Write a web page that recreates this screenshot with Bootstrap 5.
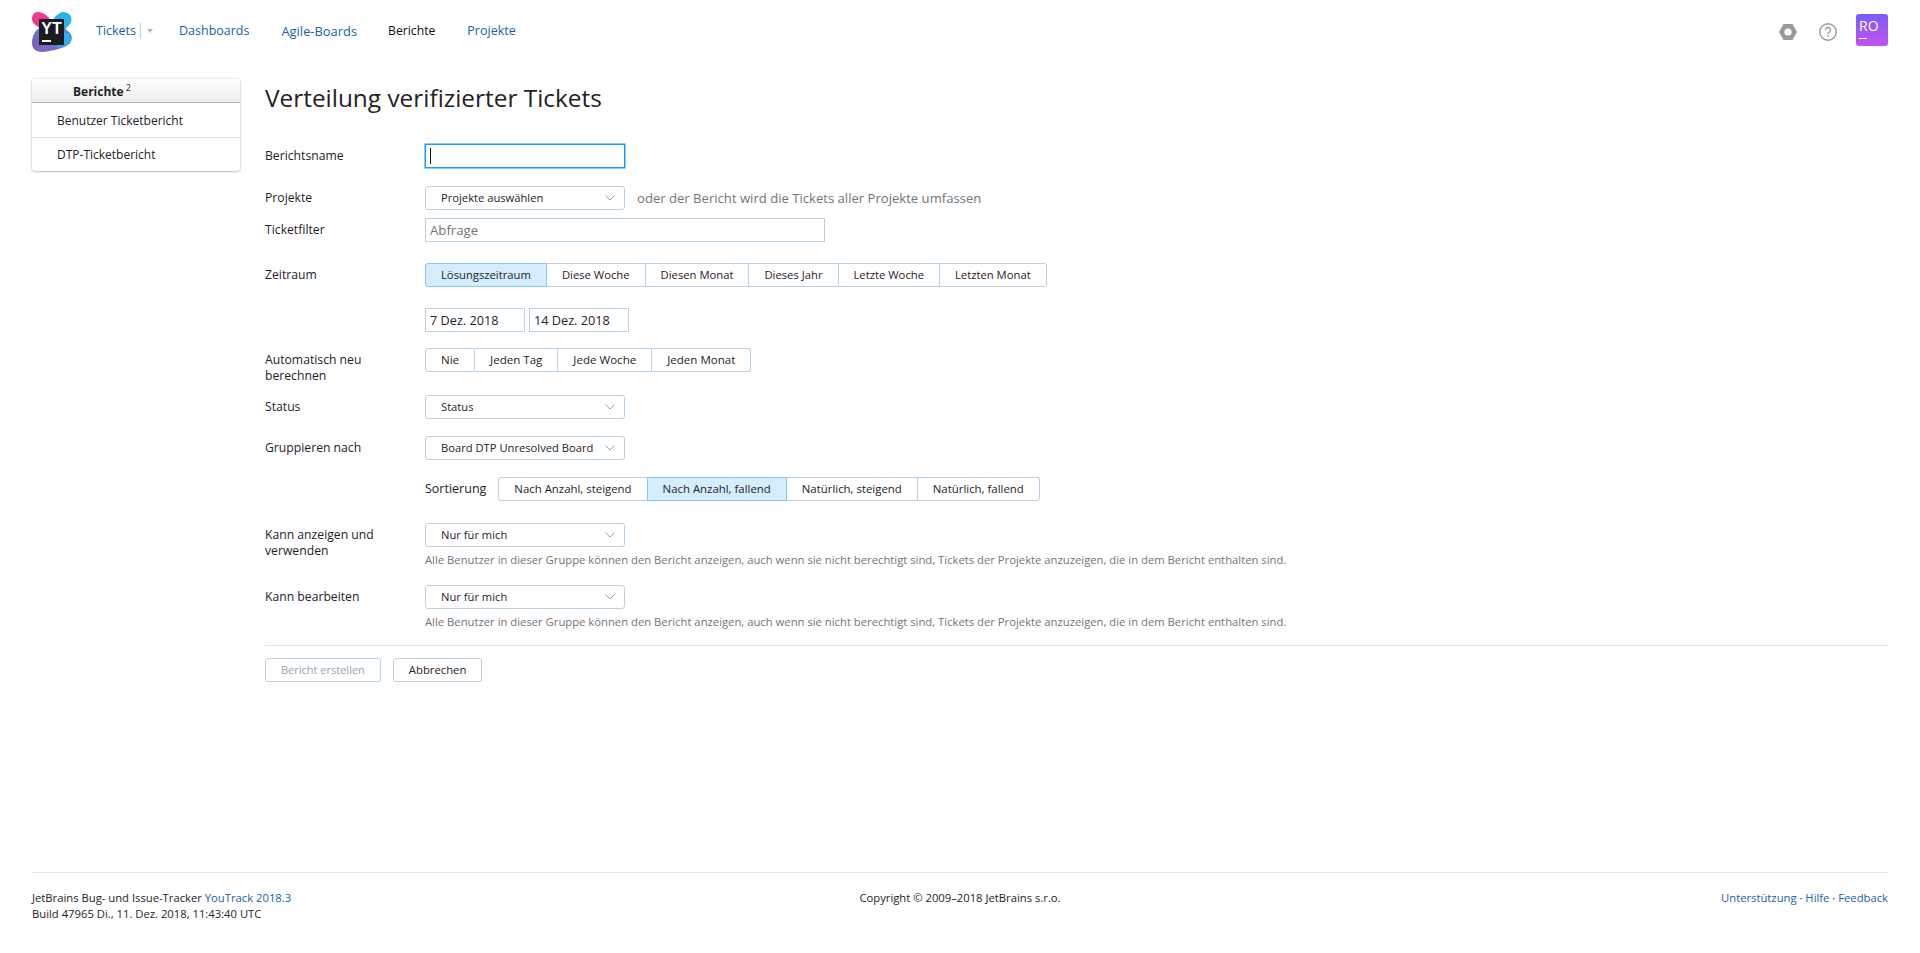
<!DOCTYPE html>
<html lang="de">
<head>
<meta charset="utf-8">
<title>Verteilung verifizierter Tickets</title>
<link href="https://cdn.jsdelivr.net/npm/bootstrap@5.3.0/dist/css/bootstrap.min.css" rel="stylesheet">
<style>
html,body{height:953px;overflow:hidden}
body{font-family:"Open Sans","Noto Sans",sans-serif;font-size:12px;line-height:16px;color:#1f2326;background:#fff}
a{text-decoration:none;color:#1a5fa8}
.yt-page{height:953px}
.yt-head{height:64px;padding:12px 32px 0}
.yt-logo{width:40px;height:40px;flex:none;position:relative}
.yt-logo svg{display:block}
.yt-logotext{position:absolute;left:7px;top:7px;width:25px;height:26px;color:#fff;font:700 16px/16px "Liberation Sans",sans-serif;text-align:center;padding-top:2px}
.yt-nav{margin-left:24px;height:37px;font-size:12.5px}
.yt-nav a{margin-right:32px}
.yt-nav .yt-cur{color:#111;font-size:12.2px}
.yt-nav .yt-ag{font-size:12.9px;margin-right:31px}
.yt-tick{width:83px;color:#1a5fa8}
.yt-sep{width:1px;height:16px;background:#b8d1e5;margin:0 4px 0 4px}
.yt-tri{width:0;height:0;border:3.5px solid transparent;border-top:4px solid #a6bdd0;margin:4px 0 0 2px}
.yt-ava{width:32px;height:32px;margin-top:2px;border-radius:3px;background:linear-gradient(#7a5cf7,#c552ec);color:#fff;font-size:14px;line-height:16px;padding:4px 0 0 3px;position:relative}
.yt-ava i{display:block;width:8px;height:1px;background:#fff;position:absolute;left:3px;top:24px}
.yt-tools{gap:19px}
.yt-nut{margin:12px 3px 0 0}
.yt-qm{margin-top:11px}
.yt-main{padding:15px 32px 0;gap:25px}
.yt-side{width:208px;height:92px;flex:none;background:#fff;border-radius:3px;box-shadow:0 0 2px rgba(0,0,0,.25),0 1px 2px rgba(0,0,0,.18)}
.yt-sidehead{height:24px;padding:5px 0 0 41px;font-weight:700;background:linear-gradient(#fff,#eee);border-bottom:1px solid #b5b5b5;border-radius:3px 3px 0 0}
.yt-sidehead sup{font-weight:400;font-size:9px;top:-5px;margin-left:2px}
.yt-sideitem{height:34px;padding:10px 0 0 25px}
.yt-sideitem + .yt-sideitem{border-top:1px solid #dfe5eb;padding-top:9px}
.yt-body{flex:1 1 0;min-width:0}
.yt-title{font-size:24.4px;line-height:32px;font-weight:400;margin:3px 0 30px}
.yt-row{display:flex}
.yt-lab{width:160px;flex:none;padding-top:4px;padding-right:40px;font-size:12.2px}
.yt-inp{height:24px;border:1px solid #b8d1e5;padding:3px 4px;color:#1f2326;background:#fff;font-size:12.7px}
.yt-focus{width:200px;border-color:#1a98ff;outline:0;box-shadow:0 0 0 .5px #1a98ff}
.yt-caret{display:block;width:1px;height:16px;background:#111}
.yt-wide{width:400px;color:#737577;font-size:13.2px}
.yt-date{width:100px}
.yt-sel{width:200px;height:24px;border:1px solid #b8d1e5;border-radius:3px;padding:3px 9px 3px 15px;background:#fff;color:#1f2326;display:flex;justify-content:space-between;align-items:center;font-size:11.2px;line-height:16px;white-space:nowrap}
.yt-grp{display:flex}
.yt-grp .yt-btn{height:24px;border:1px solid #b8d1e5;border-left-width:0;padding:3px 15px;background:#fff;color:#1f2326;font-size:11.4px;line-height:16px;white-space:nowrap}
.yt-grp .yt-btn:first-child{border-left-width:1px;border-radius:3px 0 0 3px;padding-left:15px}
.yt-grp .yt-btn:last-child{border-radius:0 3px 3px 0}
.yt-grp .yt-on{background:#d4edff;border-color:#8cc4ec}
.yt-grp .yt-on:not(:first-child){border-left-width:1px;margin-left:-1px}
.yt-r4 .yt-grp .yt-btn{font-size:11.25px}
.yt-r6 .yt-grp .yt-btn{font-size:11.55px}
.yt-hint{color:#737577;font-size:13.1px}
.yt-sort{font-size:12.5px;margin-right:12px}
.yt-help{color:#737577;font-size:11.27px;margin-top:5px}
.yt-rule{border-top:1px solid #dfe5eb;margin:0;opacity:1}
.yt-act{height:24px;border:1px solid #b8d1e5;border-radius:3px;padding:3px 15px;background:#fff;color:#1f2326;font-size:11.3px;line-height:16px}
.yt-act:disabled{color:#9a9fa3;opacity:1;font-size:11px;margin-right:12px}
.yt-foot{margin:auto 32px 0;height:81px;border-top:1px solid #dfe5eb;padding-top:17px;position:relative;font-size:11.25px}
.yt-foot > div{flex:1 1 0}
.yt-r1{margin-bottom:18px}.yt-r2{margin-bottom:8px}.yt-r3{margin-bottom:21px}.yt-r4{margin-bottom:21px}.yt-r5{margin-bottom:16px}.yt-r6{margin-bottom:11px}.yt-r7{margin-bottom:17px}.yt-r8{margin-bottom:17px}.yt-r9{margin-bottom:22px}.yt-r10{margin-bottom:17px}.yt-r11{margin-bottom:15px}.yt-btns{margin-top:12px}
</style>
</head>
<body>
<div class="yt-page d-flex flex-column">
  <header class="yt-head d-flex align-items-start">
    <div class="yt-logo">
      <svg width="40" height="40" viewBox="0 0 40 40" aria-hidden="true">
        <defs>
          <linearGradient id="ytg" x1="0" y1="1" x2="1" y2="0.2"><stop offset="0" stop-color="#8a5cb5"/><stop offset="1" stop-color="#3f8fd8"/></linearGradient>
        </defs>
        <path d="M6 0C2 0 0 3 0 7c0 3 2 5 5 7l10 8 8-10-9-9C11 1 9 0 6 0z" fill="#ee3a8c"/>
        <path d="M31 0c-3 0-5 2-8 5L14 15l12 10 12-13c2-3 2-6 0-9-2-2-4-3-7-3z" fill="#2fb0e8"/>
        <path d="M8 16C3 18 0 24 0 31c0 6 4 9 10 9 5 0 20-3 26-7 4-3 5-8 2-12l-8-7z" fill="url(#ytg)"/>
        <path d="M24 18l11 3c5 3 5 9 0 12l-9 3z" fill="#2fb0e8"/>
        <rect x="7" y="7" width="25" height="26" fill="#1c1b1f"/>
        <rect x="10" y="28" width="9" height="2" fill="#fff"/>
      </svg>
      <span class="yt-logotext">YT</span>
    </div>
    <nav class="yt-nav d-flex align-items-center">
      <span class="yt-tick d-flex align-items-center"><a href="#" class="m-0">Tickets</a><span class="yt-sep"></span><span class="yt-tri"></span></span>
      <a href="#">Dashboards</a>
      <a href="#" class="yt-ag">Agile-Boards</a>
      <a href="#" class="yt-cur">Berichte</a>
      <a href="#">Projekte</a>
    </nav>
    <div class="yt-tools ms-auto d-flex align-items-start">
      <svg class="yt-nut" width="18" height="16" viewBox="0 0 18 16" aria-hidden="true"><path d="M4.5 0h9L18 8l-4.500 8h-9L0 8z" fill="#9a9a9a"/><circle cx="9" cy="8" r="3.600" fill="#fff"/></svg>
      <svg class="yt-qm" width="18" height="18" viewBox="0 0 18 18" aria-hidden="true"><circle cx="9" cy="9" r="8.200" fill="none" stroke="#9a9a9a" stroke-width="1.400"/><path d="M6.500 7a2.500 2.500 0 1 1 3.800 2.100C9.400 9.700 9 10.200 9 11" fill="none" stroke="#9a9a9a" stroke-width="1.400"/><rect x="8.200" y="12" width="1.600" height="1.600" fill="#9a9a9a"/></svg>
      <div class="yt-ava">RO<i></i></div>
    </div>
  </header>
  <main class="yt-main d-flex align-items-start">
    <aside class="yt-side">
      <div class="yt-sidehead">Berichte<sup>2</sup></div>
      <div class="yt-sideitem">Benutzer Ticketbericht</div>
      <div class="yt-sideitem">DTP-Ticketbericht</div>
    </aside>
    <section class="yt-body">
      <h1 class="yt-title">Verteilung verifizierter Tickets</h1>
      <div class="yt-row yt-r1"><div class="yt-lab">Berichtsname</div><div class="yt-inp yt-focus"><span class="yt-caret"></span></div></div>
      <div class="yt-row yt-r2"><div class="yt-lab">Projekte</div><button type="button" class="yt-sel"><span>Projekte auswählen</span><svg width="10" height="6" viewBox="0 0 10 6"><path d="M.5.500 5 5 9.500.500" fill="none" stroke="#9aa3aa"/></svg></button><span class="yt-hint ms-2 ps-1 pt-1">oder der Bericht wird die Tickets aller Projekte umfassen</span></div>
      <div class="yt-row yt-r3"><div class="yt-lab">Ticketfilter</div><div class="yt-inp yt-wide">Abfrage</div></div>
      <div class="yt-row yt-r4"><div class="yt-lab">Zeitraum</div><div class="yt-grp"><button type="button" class="yt-btn yt-on">Lösungszeitraum</button><button type="button" class="yt-btn">Diese Woche</button><button type="button" class="yt-btn">Diesen Monat</button><button type="button" class="yt-btn">Dieses Jahr</button><button type="button" class="yt-btn">Letzte Woche</button><button type="button" class="yt-btn">Letzten Monat</button></div></div>
      <div class="yt-row yt-r5"><div class="yt-lab"></div><div class="yt-inp yt-date">7 Dez. 2018</div><div class="yt-inp yt-date ms-1">14 Dez. 2018</div></div>
      <div class="yt-row yt-r6"><div class="yt-lab">Automatisch neu berechnen</div><div class="yt-grp"><button type="button" class="yt-btn">Nie</button><button type="button" class="yt-btn">Jeden Tag</button><button type="button" class="yt-btn">Jede Woche</button><button type="button" class="yt-btn">Jeden Monat</button></div></div>
      <div class="yt-row yt-r7"><div class="yt-lab">Status</div><button type="button" class="yt-sel"><span>Status</span><svg width="10" height="6" viewBox="0 0 10 6"><path d="M.5.500 5 5 9.500.500" fill="none" stroke="#9aa3aa"/></svg></button></div>
      <div class="yt-row yt-r8"><div class="yt-lab">Gruppieren nach</div><button type="button" class="yt-sel"><span>Board DTP Unresolved Board</span><svg width="10" height="6" viewBox="0 0 10 6"><path d="M.5.500 5 5 9.500.500" fill="none" stroke="#9aa3aa"/></svg></button></div>
      <div class="yt-row yt-r9"><div class="yt-lab"></div><span class="yt-sort pt-1">Sortierung</span><div class="yt-grp"><button type="button" class="yt-btn">Nach Anzahl, steigend</button><button type="button" class="yt-btn yt-on">Nach Anzahl, fallend</button><button type="button" class="yt-btn">Natürlich, steigend</button><button type="button" class="yt-btn">Natürlich, fallend</button></div></div>
      <div class="yt-row yt-r10"><div class="yt-lab">Kann anzeigen und verwenden</div><div><button type="button" class="yt-sel"><span>Nur für mich</span><svg width="10" height="6" viewBox="0 0 10 6"><path d="M.5.500 5 5 9.500.500" fill="none" stroke="#9aa3aa"/></svg></button><div class="yt-help">Alle Benutzer in dieser Gruppe können den Bericht anzeigen, auch wenn sie nicht berechtigt sind, Tickets der Projekte anzuzeigen, die in dem Bericht enthalten sind.</div></div></div>
      <div class="yt-row yt-r11"><div class="yt-lab">Kann bearbeiten</div><div><button type="button" class="yt-sel"><span>Nur für mich</span><svg width="10" height="6" viewBox="0 0 10 6"><path d="M.5.500 5 5 9.500.500" fill="none" stroke="#9aa3aa"/></svg></button><div class="yt-help">Alle Benutzer in dieser Gruppe können den Bericht anzeigen, auch wenn sie nicht berechtigt sind, Tickets der Projekte anzuzeigen, die in dem Bericht enthalten sind.</div></div></div>
      <hr class="yt-rule">
      <div class="yt-btns d-flex"><button type="button" class="yt-act" disabled>Bericht erstellen</button><button type="button" class="yt-act">Abbrechen</button></div>
    </section>
  </main>
  <footer class="yt-foot d-flex">
    <div>JetBrains Bug- und Issue-Tracker <a href="#">YouTrack 2018.3</a><br>Build 47965 Di., 11. Dez. 2018, 11:43:40 UTC</div>
    <div class="text-center">Copyright © 2009–2018 JetBrains s.r.o.</div>
    <div class="text-end"><a href="#">Unterstützung</a> · <a href="#">Hilfe</a> · <a href="#">Feedback</a></div>
  </footer>
</div>
<script src="https://cdn.jsdelivr.net/npm/bootstrap@5.3.0/dist/js/bootstrap.bundle.min.js"></script>
</body>
</html>
